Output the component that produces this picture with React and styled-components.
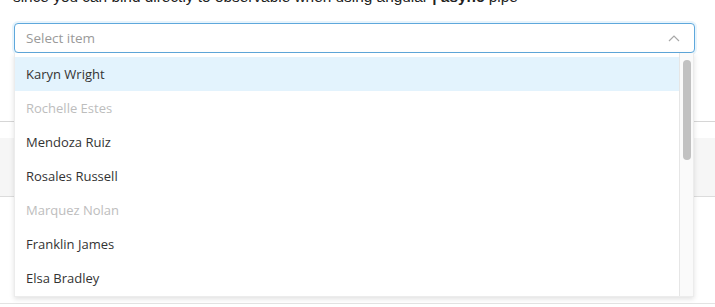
import React from "react";
import styled, { createGlobalStyle } from "styled-components";

const Global = createGlobalStyle`
  html, body { margin: 0; padding: 0; background: #fff; }
  body {
    font-family: "Open Sans", "Noto Sans", Arial, sans-serif;
    color: #333;
    width: 715px;
    height: 307px;
    overflow: hidden;
  }
`;

const Page = styled.div`
  position: relative;
  width: 715px;
  height: 307px;
  overflow: hidden;
`;

const Intro = styled.p`
  margin: -12px 0 0;
  padding: 0 13px;
  font-family: "Liberation Sans", Arial, sans-serif;
  font-size: 15.4px;
  line-height: 18px;
  color: #222;
  white-space: nowrap;
  b { font-weight: 700; }
`;

const SelectWrap = styled.div`
  position: relative;
  margin: 17px 20px 0 14px;
  z-index: 2;
`;

const Control = styled.div`
  box-sizing: border-box;
  height: 30px;
  display: flex;
  align-items: center;
  justify-content: space-between;
  padding: 0 14px 0 11px;
  border: 1px solid #5ea8dc;
  border-radius: 4px;
  box-shadow: 0 0 0 2px rgba(128, 192, 240, 0.18);
  background: #fff;
`;

const Placeholder = styled.span`
  font-size: 13.5px;
  color: #9a9a9a;
`;

const Panel = styled.div`
  position: absolute;
  top: 100%;
  left: 0;
  right: 1px;
  height: 244px;
  box-sizing: border-box;
  display: flex;
  background: #fff;
  border: 1px solid #ececec;
  border-top: none;
  box-shadow: 0 2px 5px rgba(0, 0, 0, 0.12);
  overflow: hidden;
`;

const List = styled.div`
  flex: 1;
  padding-top: 4px;
  overflow: hidden;
`;

const Track = styled.div`
  position: relative;
  width: 13px;
  flex: none;
  background: #fafafa;
  border-left: 1px solid #e6e6e6;
`;

const Thumb = styled.div`
  position: absolute;
  left: 3px;
  width: 8px;
  border-radius: 4px;
  background: #c1c1c1;
`;

const Option = styled.div`
  height: 34px;
  display: flex;
  align-items: center;
  padding-left: 11px;
  font-size: 13px;
  color: ${(p) => (p.$disabled ? "#bdbdbd" : "#333")};
  background: ${(p) => (p.$active ? "#e3f3fd" : "transparent")};
`;

const Backdrop = styled.div`
  position: absolute;
  left: 0;
  right: 0;
  top: 121px;
  height: 181px;
  border-top: 1px solid #d6d6d6;
  border-bottom: 1px solid #e3e3e3;
  display: flex;
  flex-direction: column;
  z-index: 1;
`;

const Spacer = styled.div`
  height: 16px;
`;

const GreyRow = styled.div`
  height: 58px;
  background: #f6f6f6;
  border-bottom: 1px solid #dcdcdc;
`;

const people = [
  { name: "Karyn Wright", active: true },
  { name: "Rochelle Estes", disabled: true },
  { name: "Mendoza Ruiz" },
  { name: "Rosales Russell" },
  { name: "Marquez Nolan", disabled: true },
  { name: "Franklin James" },
  { name: "Elsa Bradley" },
  { name: "Pearson Thompson" },
];

export default function App() {
  return (
    <Page>
      <Global />
      <Intro>
        since you can bind directly to observable when using angular <b>| async</b> pipe
      </Intro>
      <Backdrop>
        <Spacer />
        <GreyRow />
      </Backdrop>
      <SelectWrap>
        <Control>
          <Placeholder>Select item</Placeholder>
          <svg width="12" height="7" viewBox="0 0 12 7" fill="none">
            <polyline points="1,6 6,1 11,6" stroke="#a8a8a8" strokeWidth="1.2" />
          </svg>
        </Control>
        <Panel>
          <List>
            {people.map((p) => (
              <Option key={p.name} $active={p.active} $disabled={p.disabled}>
                {p.name}
              </Option>
            ))}
          </List>
          <Track>
            <Thumb style={{ top: 7, height: 100 }} />
          </Track>
        </Panel>
      </SelectWrap>
    </Page>
  );
}
